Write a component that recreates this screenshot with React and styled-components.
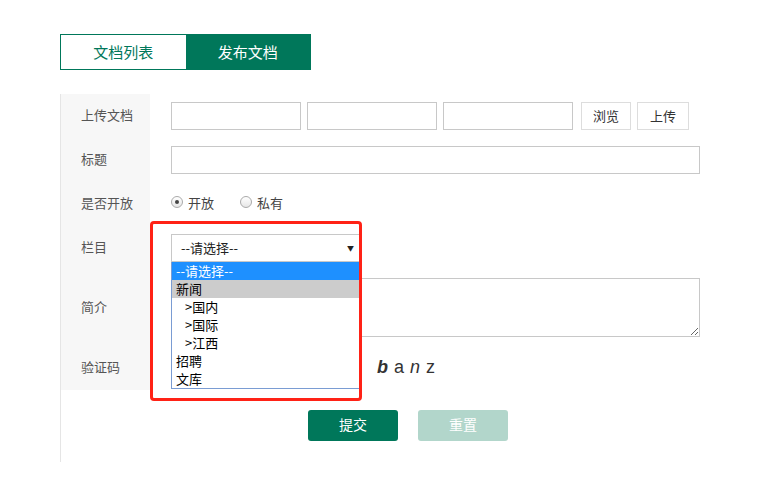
import React from "react"
import styled, { createGlobalStyle } from "styled-components"

const GlobalStyle = createGlobalStyle`
  html, body {
    margin: 0;
    padding: 0;
    background: #fff;
    font-family: "Noto Sans CJK SC", "Noto Sans", sans-serif;
  }
`

const Page = styled.div`
  padding: 34px 0 0 60px;
  width: 700px;
`

const Tabs = styled.div`
  display: flex;
  width: 251px;
  height: 36px;
  box-sizing: border-box;
  border: 1px solid #00775a;
`

const Tab = styled.div`
  flex: 1;
  display: flex;
  align-items: center;
  justify-content: center;
  padding-bottom: 2px;
  font-size: 15px;
  color: ${({ active }) => (active ? "#fff" : "#00775a")};
  background: ${({ active }) => (active ? "#00775a" : "#fff")};
`

const Panel = styled.div`
  position: relative;
  margin-top: 24px;
  width: 639px;
  border-left: 1px solid #e5e5e5;
  padding-bottom: 21px;
`

const Row = styled.div`
  display: grid;
  grid-template-columns: 89px 1fr;
  min-height: ${({ tall }) => (tall ? "76px" : "44px")};
`

const Label = styled.div`
  background: #f7f7f7;
  display: flex;
  align-items: center;
  padding: 0 0 4px 20px;
  font-size: 13px;
  color: #555;
`

const Cell = styled.div`
  display: flex;
  align-items: ${({ top }) => (top ? "flex-start" : "center")};
  padding: ${({ top }) => (top ? "8px 0 0 21px" : "0 0 0 21px")};
  position: relative;
`

const Input = styled.div`
  box-sizing: border-box;
  width: ${({ w }) => w || "100%"};
  height: 28px;
  border: 1px solid #c8c8c8;
  background: #fff;
  margin-right: ${({ mr }) => mr || "0"};
`

const SmallButton = styled.div`
  box-sizing: border-box;
  width: ${({ w }) => w};
  height: 28px;
  border: 1px solid #ddd;
  display: flex;
  align-items: center;
  justify-content: center;
  padding-bottom: 2px;
  font-size: 13px;
  color: #333;
  margin-left: ${({ ml }) => ml || "0"};
`

const RadioGroup = styled.label`
  display: flex;
  align-items: center;
  font-size: 13px;
  color: #444;
  margin: 0 26px 4px 0;
`

const RadioDot = styled.span`
  box-sizing: border-box;
  width: 12px;
  height: 12px;
  border-radius: 50%;
  border: 1px solid #aaa;
  background: linear-gradient(#fff, #e6e6e6);
  margin-right: 5px;
  display: flex;
  align-items: center;
  justify-content: center;
  &::after {
    content: "";
    width: 4px;
    height: 4px;
    border-radius: 50%;
    background: ${({ checked }) => (checked ? "#444" : "transparent")};
  }
`

const SelectBox = styled.div`
  position: relative;
  box-sizing: border-box;
  width: 190px;
  height: 28px;
  border: 1px solid #c8c8c8;
  display: flex;
  align-items: center;
  padding: 0 0 2px 9px;
  font-size: 13px;
  color: #222;
  background: #fff;
`

const Arrow = styled.span`
  position: absolute;
  right: 6px;
  top: 8px;
  font-size: 7px;
  color: #222;
`

const Dropdown = styled.ul`
  position: absolute;
  left: -1px;
  top: 27px;
  width: 189px;
  margin: 0;
  padding: 0;
  list-style: none;
  background: #fff;
  border: 1px solid #7a9cd3;
  border-top: none;
  z-index: 5;
`

const Option = styled.li`
  height: 18px;
  line-height: 18px;
  font-size: 13px;
  padding-left: ${({ indent }) => (indent ? "13px" : "4px")};
  color: ${({ state }) => (state === "active" ? "#fff" : "#000")};
  background: ${({ state }) =>
    state === "active" ? "#1e90ff" : state === "hover" ? "#cccccc" : "transparent"};
`

const TextArea = styled.textarea`
  box-sizing: border-box;
  width: 100%;
  height: 59px;
  border: 1px solid #c8c8c8;
  margin: 0;
  resize: both;
  font-family: inherit;
`

const Captcha = styled.span`
  margin: 0 0 2px 16px;
  font-family: "Liberation Sans", Arial, sans-serif;
  font-size: 18px;
  color: #333;
  word-spacing: 1px;
  b { font-style: italic; }
`

const Actions = styled.div`
  display: flex;
  gap: 20px;
  padding: 20px 0 0 247px;
`

const ActionButton = styled.div`
  width: 90px;
  height: 31px;
  border-radius: 3px;
  display: flex;
  align-items: center;
  justify-content: center;
  padding-bottom: 3px;
  box-sizing: border-box;
  font-size: 14px;
  color: #fff;
  background: ${({ muted }) => (muted ? "#b2d6cb" : "#00775a")};
`

const Highlight = styled.div`
  position: absolute;
  left: 89px;
  top: 127px;
  width: 212px;
  height: 180px;
  box-sizing: border-box;
  border: 3px solid #ff2216;
  border-radius: 4px;
  pointer-events: none;
  z-index: 6;
`

const options = [
  { text: "--请选择--", state: "active" },
  { text: "新闻", state: "hover" },
  { text: ">国内", indent: true },
  { text: ">国际", indent: true },
  { text: ">江西", indent: true },
  { text: "招聘" },
  { text: "文库" },
]

export default function App() {
  return (
    <Page>
      <GlobalStyle />
      <Tabs>
        <Tab>文档列表</Tab>
        <Tab active>发布文档</Tab>
      </Tabs>
      <Panel>
        <Row>
          <Label>上传文档</Label>
          <Cell>
            <Input w="130px" mr="6px" />
            <Input w="130px" mr="6px" />
            <Input w="130px" />
            <SmallButton w="50px" ml="8px">浏览</SmallButton>
            <SmallButton w="52px" ml="6px">上传</SmallButton>
          </Cell>
        </Row>
        <Row>
          <Label>标题</Label>
          <Cell>
            <Input />
          </Cell>
        </Row>
        <Row>
          <Label>是否开放</Label>
          <Cell>
            <RadioGroup><RadioDot checked />开放</RadioGroup>
            <RadioGroup><RadioDot />私有</RadioGroup>
          </Cell>
        </Row>
        <Row>
          <Label>栏目</Label>
          <Cell>
            <SelectBox>
              --请选择--
              <Arrow>▼</Arrow>
              <Dropdown>
                {options.map(o => (
                  <Option key={o.text} state={o.state} indent={o.indent}>{o.text}</Option>
                ))}
              </Dropdown>
            </SelectBox>
          </Cell>
        </Row>
        <Row tall>
          <Label>简介</Label>
          <Cell top>
            <TextArea />
          </Cell>
        </Row>
        <Row>
          <Label>验证码</Label>
          <Cell>
            <Input w="190px" />
            <Captcha><b>b</b> a <i>n</i> z</Captcha>
          </Cell>
        </Row>
        <Actions>
          <ActionButton>提交</ActionButton>
          <ActionButton muted>重置</ActionButton>
        </Actions>
        <Highlight />
      </Panel>
    </Page>
  )
}
